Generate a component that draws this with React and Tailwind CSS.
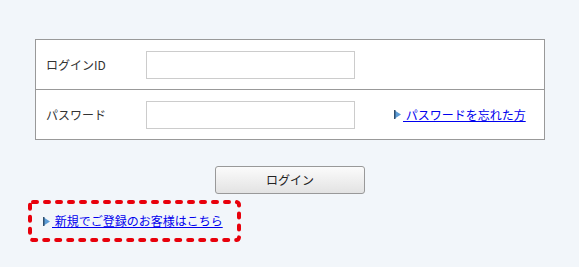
import React from "react";

const Arrow = () => (
  <svg width="7" height="9" viewBox="0 0 7 9" className="shrink-0">
    <polygon points="0,0 7,4.5 0,9" fill="#5b9bd5" />
    <rect x="0" y="0" width="1.5" height="9" fill="#2f4f6f" />
  </svg>
);

export default function App() {
  const font = { fontFamily: '"Noto Sans CJK JP", "Noto Sans", sans-serif' };
  return (
    <div className="w-[579px] h-[267px] bg-[#f2f6fa] overflow-hidden" style={font}>
      <div className="pl-[35px] pt-[39px] w-[545px]">
        <div className="border border-[#999] bg-white">
          <div className="h-[50px] flex items-center border-b border-[#999]">
            <div className="w-[110px] pl-[10px] text-[12px] text-[#333]">ログインID</div>
            <div className="w-[209px] h-[28px] border border-[#ccc] bg-white" />
          </div>
          <div className="h-[49px] flex items-center">
            <div className="w-[110px] pl-[10px] text-[12px] text-[#333]">パスワード</div>
            <div className="w-[209px] h-[28px] border border-[#ccc] bg-white" />
            <div className="ml-[39px] flex items-center gap-[2px]">
              <Arrow />
              <a href="#" className="text-[12px] text-[#0000ee] underline leading-none">&nbsp;パスワードを忘れた方</a>
            </div>
          </div>
        </div>
        <div className="flex justify-center mt-[26px]">
          <button className="w-[150px] h-[28px] rounded-[3px] border border-[#999] bg-gradient-to-b from-[#fbfbfb] to-[#e3e3e3] text-[12px] text-[#222]">
            ログイン
          </button>
        </div>
      </div>
      <div className="ml-[28px] mt-[6px] relative w-[213px] h-[42px] flex items-center pl-[15px]">
        <svg className="absolute inset-0" width="213" height="42">
          <rect x="2" y="2" width="209" height="38" rx="3" fill="none" stroke="#e8000b" strokeWidth="4" strokeDasharray="4 8" strokeLinecap="round" />
        </svg>
        <div className="flex items-center gap-[2px]">
          <Arrow />
          <a href="#" className="text-[12px] text-[#0000ee] underline leading-none">&nbsp;新規でご登録のお客様はこちら</a>
        </div>
      </div>
    </div>
  );
}
